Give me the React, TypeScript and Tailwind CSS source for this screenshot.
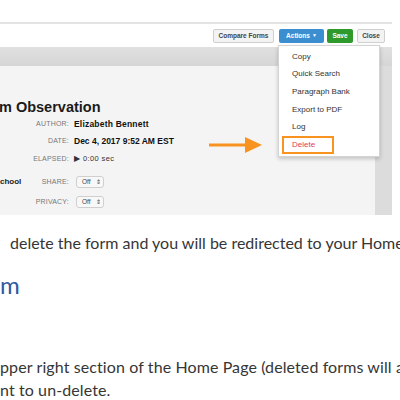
import React from "react";

const sans = { fontFamily: '"Liberation Sans", Arial, sans-serif' };

function Field({ label, children, left }: { label: string; children: React.ReactNode; left?: string }) {
  return (
    <div className="flex items-center h-full">
      <div className="w-[69px] flex items-center justify-between shrink-0">
        <span className="text-[8px] font-bold text-[#222]">{left ?? ""}</span>
        <span className="text-[7px] text-[#777] tracking-[0.2px]">{label}</span>
      </div>
      <div className="ml-[5px] flex items-center">{children}</div>
    </div>
  );
}

function SelectBox() {
  return (
    <div className="ml-[2px] w-[28px] h-[12px] rounded-[3px] border border-[#cfcfcf] bg-[#f8f8f8] flex items-center pl-[5px] gap-[5px] text-[6.5px] text-[#444]">
      <span>Off</span>
      <span className="text-[6px] leading-none">⇕</span>
    </div>
  );
}

export default function App() {
  return (
    <div className="w-[400px] h-[400px] bg-white overflow-hidden relative" style={sans}>
      <div className="w-[392px] relative">
        <div className="h-[22px]" />
        <div className="h-[2px] bg-[#e3e3e3]" />
        <div className="h-[23px] flex items-start justify-end pr-[7px] pt-[5px] gap-[4px]">
          <div className="w-[61px] h-[14px] border border-[#cfcfcf] bg-[#f3f3f3] rounded-[2px] flex items-center justify-center text-[6.5px] font-bold text-[#444]">
            Compare Forms
          </div>
          <div className="ml-[1px] w-[45px] h-[14px] bg-[#3b8fd1] rounded-[2px] flex items-center justify-center gap-[2px] text-[6.5px] font-bold text-white">
            <span>Actions</span>
            <span className="text-[5px]">▼</span>
          </div>
          <div className="-ml-[1px] w-[26px] h-[14px] bg-[#2e9a2b] rounded-[2px] flex items-center justify-center text-[6.5px] font-bold text-white">
            Save
          </div>
          <div className="w-[28px] h-[14px] border border-[#cfcfcf] bg-[#f3f3f3] rounded-[2px] flex items-center justify-center text-[6.5px] font-bold text-[#444]">
            Close
          </div>
        </div>
        <div className="h-[19px] bg-[linear-gradient(#e0e0e0,#d6d6d6)]" />
        <div className="h-[149px] flex">
          <div className="w-[375px] bg-[#f4f4f4] pt-[33px]">
            <div className="h-[16px] flex items-center text-[14.5px] font-bold text-[#1a1a1a] leading-none -ml-[1px]">
              m Observation
            </div>
            <div className="h-[18px]">
              <Field label="AUTHOR:">
                <span className="text-[8.5px] font-bold text-[#111] tracking-[0.2px]">Elizabeth Bennett</span>
              </Field>
            </div>
            <div className="h-[17px]">
              <Field label="DATE:">
                <span className="text-[8.5px] font-bold text-[#111]">Dec 4, 2017 9:52 AM EST</span>
              </Field>
            </div>
            <div className="h-[18px]">
              <Field label="ELAPSED:">
                <span className="text-[7.5px] text-[#333] tracking-[0.4px]">▶ 0:00 sec</span>
              </Field>
            </div>
            <div className="h-[20px] mt-[4px]">
              <Field label="SHARE:" left="chool">
                <SelectBox />
              </Field>
            </div>
            <div className="h-[20px]">
              <Field label="PRIVACY:">
                <SelectBox />
              </Field>
            </div>
          </div>
          <div className="w-[17px] bg-[#dcdcdc]" />
        </div>

        {/* Dropdown menu */}
        <div className="absolute left-[278px] top-[45px] w-[102px] h-[112px] bg-white border border-[#d4d4d4] shadow-[0_2px_4px_rgba(0,0,0,0.2)] pt-[2px] text-[8px] text-[#333]">
          <div className="h-[17.6px] flex items-center pl-[13px]">Copy</div>
          <div className="h-[17.6px] flex items-center pl-[13px]">Quick Search</div>
          <div className="h-[17.6px] flex items-center pl-[13px]">Paragraph Bank</div>
          <div className="h-[17.6px] flex items-center pl-[13px]">Export to PDF</div>
          <div className="h-[17.6px] flex items-center pl-[13px]">Log</div>
          <div className="ml-[3px] w-[52px] h-[18px] border-2 border-[#f7931e] flex items-center pl-[8px] text-[#e23b55]">
            Delete
          </div>
        </div>

        {/* Arrow */}
        <svg className="absolute left-[208px] top-[136px]" width="56" height="18" viewBox="0 0 56 18">
          <rect x="1" y="7.5" width="38" height="3" fill="#f7931e" />
          <polygon points="37,1 54,9 37,17" fill="#f7931e" />
        </svg>
      </div>

      <div className="text-[#363636] text-[16px]" style={{ fontFamily: 'Lato, "Open Sans", sans-serif' }}>
        <div className="h-[18px]" />
        <div className="leading-[20px] whitespace-nowrap pl-[10px]">delete the form and you will be redirected to your Home</div>
        <div className="mt-[17px] leading-[30px] text-[24px] text-[#2e5aa0] whitespace-nowrap">m</div>
        <div className="mt-[55px] leading-[23px] whitespace-nowrap tracking-[0.1px]">pper right section of the Home Page (deleted forms will a</div>
        <div className="leading-[23px] whitespace-nowrap tracking-[0.1px]">nt to un-delete.</div>
      </div>
    </div>
  );
}
